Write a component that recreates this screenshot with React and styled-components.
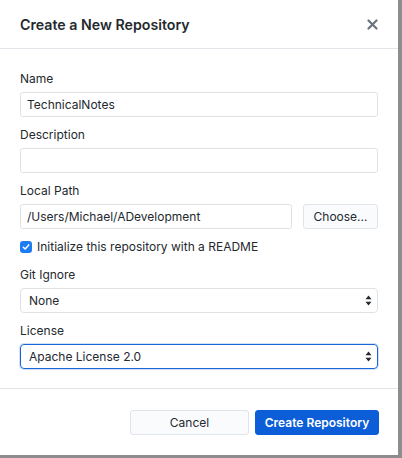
import React from 'react';
import styled, { createGlobalStyle } from 'styled-components';

const GlobalStyle = createGlobalStyle`
  html, body {
    margin: 0;
    padding: 0;
    background: #8d8d8d;
  }
  body {
    font-family: Inter, "Noto Sans", "Liberation Sans", sans-serif;
    color: #24292e;
    -webkit-font-smoothing: antialiased;
  }
`;

const Dialog = styled.div`
  width: 398px;
  height: 455px;
  background: #fff;
  display: flex;
  flex-direction: column;
  box-sizing: border-box;
`;

const Header = styled.div`
  height: 49px;
  flex: none;
  box-sizing: border-box;
  display: flex;
  align-items: center;
  justify-content: space-between;
  padding: 1px 19px 0 20px;
  border-bottom: 1px solid #e1e4e8;
`;

const Title = styled.h1`
  margin: 0;
  font-size: 14.2px;
  font-weight: 600;
  color: #24292e;
`;

const Close = styled.button`
  border: none;
  background: none;
  padding: 0;
  width: 14px;
  height: 14px;
  display: flex;
  align-items: center;
  justify-content: center;
  color: #6a737d;
`;

const Body = styled.div`
  flex: 1;
  padding: 22px 20px 0 20px;
  display: flex;
  flex-direction: column;
  border-bottom: 1px solid #e1e4e8;
`;

const Field = styled.div`
  display: flex;
  flex-direction: column;
  margin-bottom: 10px;
`;

const Label = styled.label`
  font-size: 12px;
  line-height: 15px;
  margin-bottom: 6px;
  color: #24292e;
`;

const Input = styled.div`
  height: 25px;
  flex: none;
  box-sizing: border-box;
  border: 1px solid #dfe2e5;
  border-radius: 3px;
  padding: 0 6px;
  display: flex;
  align-items: center;
  font-size: 12px;
  color: #24292e;
`;

const Row = styled.div`
  display: flex;
  gap: 11px;

  ${Input} {
    flex: 1;
  }
`;

const Button = styled.button`
  height: 25px;
  box-sizing: border-box;
  border-radius: 3px;
  font-family: inherit;
  font-size: 12px;
  padding: 0;
  flex: none;
  width: ${p => p.$w}px;
  border: 1px solid ${p => (p.$primary ? '#0b5ed8' : '#e1e4e8')};
  background: ${p => (p.$primary ? '#0b5ed8' : '#fafbfc')};
  color: ${p => (p.$primary ? '#fff' : '#24292e')};
  font-weight: ${p => (p.$primary ? 600 : 400)};
`;

const Check = styled.div`
  display: flex;
  align-items: center;
  gap: 5px;
  font-size: 12px;
  line-height: 14px;
  margin: 1px 0 13px;
`;

const Box = styled.span`
  width: 12px;
  height: 12px;
  border-radius: 3px;
  background: #1d7cf2;
  display: flex;
  align-items: center;
  justify-content: center;
`;

const Select = styled.div`
  height: 25px;
  box-sizing: border-box;
  border: 1px solid ${p => (p.$focus ? '#1a66d9' : '#dfe2e5')};
  box-shadow: ${p => (p.$focus ? '0 0 0 1px rgba(26,102,217,0.2)' : 'none')};
  border-radius: 4px;
  padding: 0 5px 0 8px;
  display: flex;
  align-items: center;
  justify-content: space-between;
  font-size: 12px;
  color: #24292e;
`;

const Footer = styled.div`
  height: 65px;
  flex: none;
  display: flex;
  justify-content: flex-end;
  align-items: center;
  gap: 6px;
  padding: 1px 19px 0 0;
`;

const Arrows = () => (
  <svg width="7" height="11" viewBox="0 0 7 11">
    <path d="M3.5 0.5 L6.5 4.2 H0.5 Z" fill="#24292e" />
    <path d="M3.5 10.5 L6.5 6.8 H0.5 Z" fill="#24292e" />
  </svg>
);

export default function App() {
  return (
    <>
      <GlobalStyle />
      <Dialog>
        <Header>
          <Title>Create a New Repository</Title>
          <Close aria-label="close">
            <svg width="11" height="11" viewBox="0 0 11 11">
              <path d="M1.5 1.5 L9.5 9.5 M9.5 1.5 L1.5 9.5" stroke="#6a737d" strokeWidth="2.2" strokeLinecap="round" />
            </svg>
          </Close>
        </Header>
        <Body>
          <Field>
            <Label>Name</Label>
            <Input>TechnicalNotes</Input>
          </Field>
          <Field>
            <Label>Description</Label>
            <Input />
          </Field>
          <Field>
            <Label>Local Path</Label>
            <Row>
              <Input>/Users/Michael/ADevelopment</Input>
              <Button $w={75}>Choose...</Button>
            </Row>
          </Field>
          <Check>
            <Box>
              <svg width="8" height="8" viewBox="0 0 8 8">
                <path d="M1.3 4.2 L3.2 6 L6.7 1.9" stroke="#fff" strokeWidth="1.5" fill="none" strokeLinecap="round" strokeLinejoin="round" />
              </svg>
            </Box>
            Initialize this repository with a README
          </Check>
          <Field>
            <Label>Git Ignore</Label>
            <Select>
              None
              <Arrows />
            </Select>
          </Field>
          <Field>
            <Label>License</Label>
            <Select $focus>
              Apache License 2.0
              <Arrows />
            </Select>
          </Field>
        </Body>
        <Footer>
          <Button $w={119}>Cancel</Button>
          <Button $w={124} $primary>Create Repository</Button>
        </Footer>
      </Dialog>
    </>
  );
}
